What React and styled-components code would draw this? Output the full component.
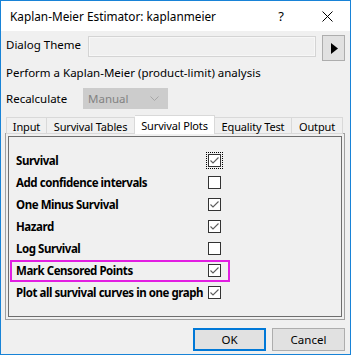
import React from "react";
import styled, { createGlobalStyle } from "styled-components";

const GlobalStyle = createGlobalStyle`
  body {
    margin: 0;
    font-family: "Noto Sans", "Open Sans", sans-serif;
    font-size: 11.5px;
    color: #000;
  }
`;

const rows = [
  { label: "Survival", checked: true, focused: true },
  { label: "Add confidence intervals", checked: false },
  { label: "One Minus Survival", checked: true },
  { label: "Hazard", checked: true },
  { label: "Log Survival", checked: false },
  { label: "Mark Censored Points", checked: true, marked: true },
  { label: "Plot all survival curves in one graph", checked: true }
];

const tabs = [
  { label: "Input", width: 41 },
  { label: "Survival Tables", width: 88 },
  { label: "Survival Plots", width: 80, active: true },
  { label: "Equality Test", width: 77 },
  { label: "Output", width: 51 }
];

function CheckMark() {
  return (
    <svg width="11" height="11" viewBox="0 0 11 11">
      <polyline points="1.5,5.5 4,8 9.5,2.5" fill="none" stroke="#5c5c5c" strokeWidth="1.1" />
    </svg>
  );
}

function App() {
  return (
    <>
      <GlobalStyle />
      <Window>
        <TitleBar>
          <Title>Kaplan-Meier Estimator: kaplanmeier</Title>
          <CaptionButton>?</CaptionButton>
          <CaptionButton>
            <svg width="11" height="11" viewBox="0 0 11 11">
              <path d="M0.5 0.5 L10.5 10.5 M10.5 0.5 L0.5 10.5" stroke="#000" strokeWidth="1" />
            </svg>
          </CaptionButton>
        </TitleBar>
        <Body>
          <ThemeRow>
            <ThemeLabel>Dialog Theme</ThemeLabel>
            <ThemeField />
            <ArrowButton>
              <svg width="7" height="11" viewBox="0 0 7 11">
                <polygon points="0,0 7,5.5 0,11" fill="#000" />
              </svg>
            </ArrowButton>
          </ThemeRow>
          <Description>Perform a Kaplan-Meier (product-limit) analysis</Description>
          <RecalcRow>
            <RecalcLabel>Recalculate</RecalcLabel>
            <Combo>
              <span>Manual</span>
              <svg width="9" height="5" viewBox="0 0 9 5">
                <polyline points="0.5,0.5 4.5,4.5 8.5,0.5" fill="none" stroke="#a6a6a6" strokeWidth="1" />
              </svg>
            </Combo>
          </RecalcRow>
          <TabStrip>
            {tabs.map(t => (
              <Tab key={t.label} active={t.active} width={t.width}>
                {t.label}
              </Tab>
            ))}
          </TabStrip>
          <TabPanel>
            <GroupBox>
              {rows.map(r => (
                <OptionRow key={r.label} marked={r.marked}>
                  <OptionLabel>{r.label}</OptionLabel>
                  <CheckBox focused={r.focused}>{r.checked && <CheckMark />}</CheckBox>
                </OptionRow>
              ))}
            </GroupBox>
          </TabPanel>
          <ButtonRow>
            <DialogButton primary>OK</DialogButton>
            <DialogButton>Cancel</DialogButton>
          </ButtonRow>
        </Body>
      </Window>
    </>
  );
}

const Window = styled.div`
  width: 351px;
  height: 355px;
  box-sizing: border-box;
  border: 1px solid #1883d7;
  background: #f0f0f0;
  display: flex;
  flex-direction: column;
  overflow: hidden;
`;

const TitleBar = styled.div`
  height: 30px;
  background: #fff;
  display: flex;
  align-items: center;
  padding-left: 9px;
`;

const Title = styled.div`
  flex: 1;
  font-size: 11.8px;
`;

const CaptionButton = styled.div`
  width: 46px;
  height: 30px;
  display: flex;
  align-items: center;
  justify-content: center;
  font-size: 13px;
`;

const Body = styled.div`
  padding: 0 5px 0 4px;
  display: flex;
  flex-direction: column;
`;

const ThemeRow = styled.div`
  display: flex;
  align-items: flex-start;
  height: 26px;
  margin-top: 4px;
  padding-left: 1px;
`;

const ThemeLabel = styled.div`
  width: 82px;
  line-height: 16px;
  margin-top: 2px;
`;

const ThemeField = styled.div`
  width: 229px;
  height: 21px;
  margin-top: 1px;
  box-sizing: border-box;
  border: 1px solid #d4d4d4;
  background: #f0f0f0;
  box-shadow: inset 0 0 0 1px #f7f7f7;
`;

const ArrowButton = styled.div`
  width: 23px;
  height: 26px;
  margin-left: 6px;
  box-sizing: border-box;
  border: 1px solid #adadad;
  background: #e1e1e1;
  display: flex;
  align-items: center;
  justify-content: center;
  padding-left: 1px;
`;

const Description = styled.div`
  margin-top: 4px;
  padding-left: 1px;
  line-height: 16px;
`;

const RecalcRow = styled.div`
  display: flex;
  align-items: center;
  margin-top: 7px;
  padding-left: 1px;
`;

const RecalcLabel = styled.div`
  width: 77px;
`;

const Combo = styled.div`
  width: 85px;
  height: 21px;
  box-sizing: border-box;
  background: #cccccc;
  border: 1px solid #cccccc;
  color: #838383;
  display: flex;
  align-items: center;
  justify-content: space-between;
  padding: 0 8px 0 4px;
`;

const TabStrip = styled.div`
  display: flex;
  align-items: flex-end;
  margin-top: 6px;
  height: 19px;
  padding-left: 1px;
  position: relative;
  z-index: 1;
`;

const Tab = styled.div`
  width: ${p => p.width}px;
  height: ${p => (p.active ? "19px" : "17px")};
  box-sizing: border-box;
  padding-top: ${p => (p.active ? "0" : "1px")};
  background: ${p => (p.active ? "#fff" : "#f0f0f0")};
  border: 1px solid #d9d9d9;
  border-bottom: ${p => (p.active ? "none" : "1px solid #d9d9d9")};
  border-left-width: 0;
  display: flex;
  align-items: center;
  justify-content: center;
  white-space: nowrap;
  font-size: 11px;
  letter-spacing: -0.15px;
  line-height: 15px;
  &:first-child {
    border-left-width: 1px;
  }
`;

const TabPanel = styled.div`
  height: 187px;
  box-sizing: border-box;
  border: 1px solid #a0a0a0;
  margin-top: -1px;
  padding: 2px;
`;

const GroupBox = styled.div`
  height: 100%;
  box-sizing: border-box;
  border: 1px solid #6e6e6e;
  padding: 12px 0 0 7px;
  display: flex;
  flex-direction: column;
`;

const OptionRow = styled.div`
  display: grid;
  grid-template-columns: 192px 13px;
  align-items: center;
  width: 205px;
  height: 22px;
  position: relative;
  &::after {
    content: "";
    display: ${p => (p.marked ? "block" : "none")};
    position: absolute;
    left: -6px;
    right: -9px;
    top: 1px;
    bottom: -1px;
    border: 2px solid #e21ee2;
  }
`;

const OptionLabel = styled.div`
  font-weight: 700;
  font-size: 11.5px;
  letter-spacing: -0.45px;
  white-space: nowrap;
`;

const CheckBox = styled.div`
  width: 13px;
  height: 13px;
  box-sizing: border-box;
  border: 1px solid #333;
  background: #fff;
  display: flex;
  align-items: center;
  justify-content: center;
  outline: ${p => (p.focused ? "1px dotted #000" : "none")};
  outline-offset: 1px;
`;

const ButtonRow = styled.div`
  display: flex;
  justify-content: flex-end;
  gap: 6px;
  margin-top: 8px;
`;

const DialogButton = styled.div`
  width: 73px;
  height: 23px;
  box-sizing: border-box;
  background: #e1e1e1;
  border: ${p => (p.primary ? "2px solid #0078d7" : "1px solid #adadad")};
  display: flex;
  align-items: center;
  justify-content: center;
`;

export default App;
